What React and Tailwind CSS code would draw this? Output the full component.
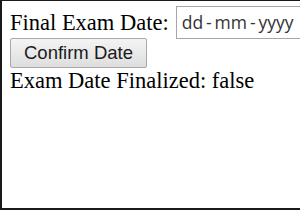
export default function App() {
  return (
    <div className="w-[300px] h-[210px] overflow-hidden bg-white border-t border-l-2 border-b-2 border-[#1a1a1a] pl-[8px] pt-[5px] text-black">
      <div className="flex items-center h-[33px] whitespace-nowrap">
        <span className="text-[22.5px] leading-[26px] font-['Liberation_Serif',serif]">
          Final Exam Date:
        </span>
        <div className="ml-[7px] h-[33px] w-[160px] shrink-0 border border-[#a6a6a6] bg-white flex items-center pl-[5px] text-[17.5px] text-[#333] font-['Open_Sans','Noto_Sans',sans-serif]">
          dd{"\u2009-\u2009"}mm{"\u2009-\u2009"}yyyy
        </div>
      </div>
      <div className="mt-[-1px]">
        <button className="h-[30px] w-[137px] border border-[#a9a9a9] rounded-[2px] bg-gradient-to-b from-[#f4f4f4] to-[#dedede] text-[18.5px] text-[#1a1a1a] flex items-center justify-center font-['Liberation_Sans',Arial,sans-serif]">
          Confirm Date
        </button>
      </div>
      <div className="text-[22.5px] leading-[26px] whitespace-nowrap font-['Liberation_Serif',serif]">
        Exam Date Finalized: false
      </div>
    </div>
  );
}
